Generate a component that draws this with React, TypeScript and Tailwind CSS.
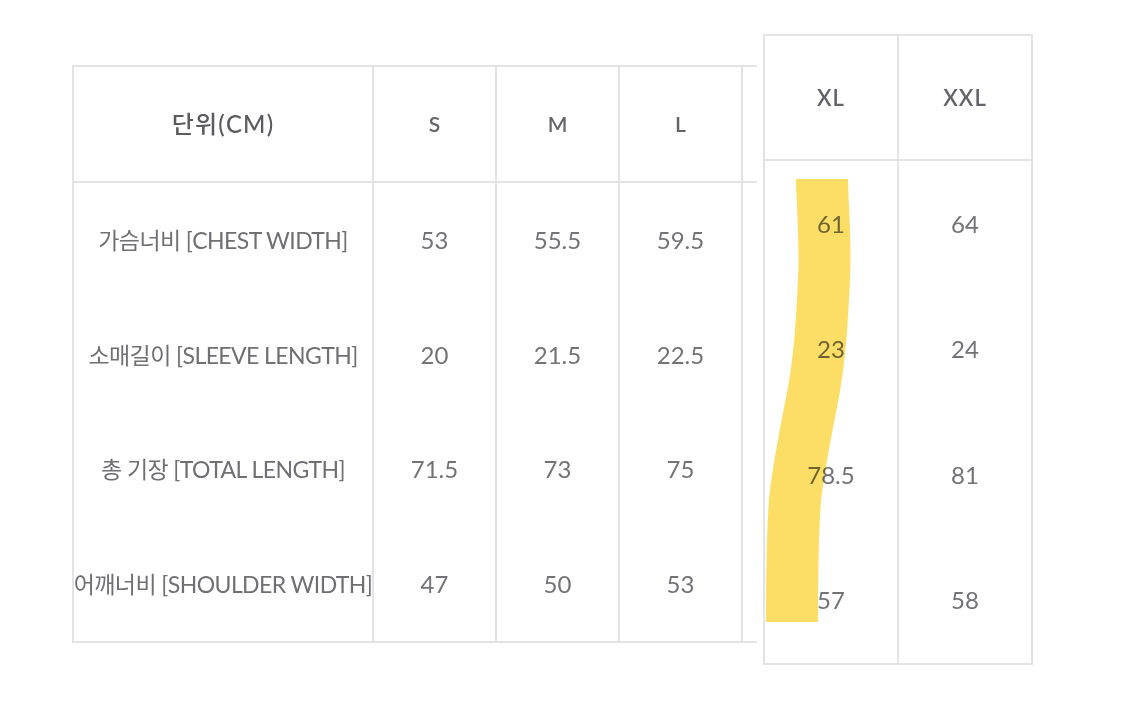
import React from "react";

const font = { fontFamily: "Lato, 'Noto Sans CJK KR', sans-serif" };

const rows = [
  { label: "가슴너비 [CHEST WIDTH]", v: ["53", "55.5", "59.5", "61", "64"] },
  { label: "소매길이 [SLEEVE LENGTH]", v: ["20", "21.5", "22.5", "23", "24"] },
  { label: "총 기장 [TOTAL LENGTH]", v: ["71.5", "73", "75", "78.5", "81"] },
  { label: "어깨너비 [SHOULDER WIDTH]", v: ["47", "50", "53", "57", "58"] },
];

const line = "border-[#e3e3e6]";

const LeftTable = () => (
  <div className={`mt-[31px] border-l-2 border-t-2 border-b-2 ${line} flex`}>
    <div className={`w-[300px] border-r-2 ${line}`}>
      <div className={`h-[116px] flex items-center justify-center border-b-2 ${line} text-[24px] font-medium text-[#5a5a60] tracking-wider`}>
        단위(CM)
      </div>
      {rows.map((r) => (
        <div key={r.label} className="h-[114.5px] flex items-center justify-center text-[23px] text-[#6f6f74] whitespace-nowrap tracking-tight">
          {r.label}
        </div>
      ))}
    </div>
    {["S", "M", "L"].map((s, i) => (
      <div key={s} className={`w-[123px] border-r-2 ${line}`}>
        <div className={`h-[116px] flex items-center justify-center border-b-2 ${line} text-[21px] font-semibold text-[#636369]`}>
          {s}
        </div>
        {rows.map((r) => (
          <div key={r.label} className="h-[114.5px] flex items-center justify-center text-[24px] text-[#727277]">
            {r.v[i]}
          </div>
        ))}
      </div>
    ))}
    <div className="w-[14px]">
      <div className={`h-[116px] border-b-2 ${line}`} />
    </div>
  </div>
);

const RightTable = () => (
  <div className={`ml-[6px] border-l-2 border-t-2 border-b-2 ${line} flex`}>
    {["XL", "XXL"].map((s, i) => (
      <div key={s} className={`w-[134px] border-r-2 ${line}`}>
        <div className={`h-[125px] flex items-center justify-center border-b-2 ${line} text-[22px] font-semibold text-[#636369] tracking-wider`}>
          {s}
        </div>
        {rows.map((r) => (
          <div key={r.label} className="h-[125.5px] flex items-center justify-center text-[24px] text-[#727277]">
            {r.v[3 + i]}
          </div>
        ))}
      </div>
    ))}
  </div>
);

export default function App() {
  return (
    <div className="relative w-[1125px] h-[715px] bg-white overflow-hidden" style={font}>
      <div className="flex items-start pt-[34px] pl-[72px]">
        <LeftTable />
        <RightTable />
      </div>
      <svg className="absolute inset-0 pointer-events-none mix-blend-multiply" width="1125" height="715" viewBox="0 0 1125 715">
        <path
          d="M822 179 C822 200 826 240 824 280 C822 320 820 360 812 400 C804 440 798 470 795 500 C792 540 792 580 792 622"
          fill="none"
          stroke="#fcda55"
          strokeWidth="52"
          strokeLinecap="butt"
          strokeLinejoin="round"
          opacity="0.9"
        />
      </svg>
    </div>
  );
}
